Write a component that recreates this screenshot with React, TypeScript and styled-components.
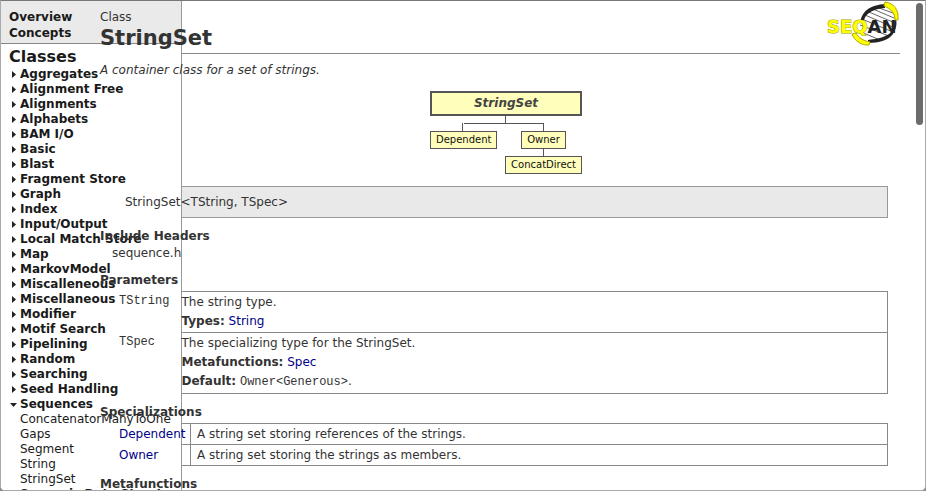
import React from "react";
import styled, { createGlobalStyle, css } from "styled-components";

const GlobalStyle = createGlobalStyle`
  *, *::before, *::after { box-sizing: border-box; }
  body {
    margin: 0;
    background: #8a8a8a;
    color: #333;
    font: 12px/16px "DejaVu Sans", Verdana, sans-serif;
  }
  a { color: inherit; text-decoration: none; }
`;

const Frame = styled.div`
  position: relative;
  display: grid;
  grid-template-columns: 181px minmax(0, 1fr);
  grid-template-rows: minmax(0, 1fr);
  height: 100vh;
  overflow: hidden;
  background: #fff;
  border: 1px solid #aaa;
  border-top-color: #777;
  border-radius: 0 0 5px 5px;
`;

const Sidebar = styled.aside`
  z-index: 1;
  grid-column: 1;
  grid-row: 1;
  display: flex;
  flex-direction: column;
  overflow: hidden;
  background: #fff;
  border-right: 1px solid #999;
  color: #1a1a1a;
`;

const TopLinks = styled.nav`
  display: flex;
  flex-direction: column;
  padding: 8px 8px 2px;
  background: #eaeaea;
  border-bottom: 1px solid #888;
  font-weight: bold;
`;

const SidebarTitle = styled.h2`
  margin: 0;
  padding: 2px 8px 0;
  font-size: 16px;
  line-height: 21px;
`;

const Tree = styled.ul`
  margin: 0;
  padding: 0 8px;
  list-style: none;
  line-height: 15px;
  white-space: nowrap;
`;

const Category = styled.button`
  display: flex;
  align-items: center;
  padding: 0;
  border: 0;
  background: none;
  color: inherit;
  font: inherit;
  font-weight: bold;
`;

const Arrow = styled.svg`
  width: 11px;
  height: 9px;
  flex: none;
`;

const Leaves = styled.ul`
  margin: 0;
  padding: 0 0 0 11px;
  list-style: none;
`;

const Main = styled.main`
  grid-column: 1 / -1;
  grid-row: 1;
  padding: 8px 25px 0 0;
  overflow: hidden;
`;

const above = css`
  position: relative;
  z-index: 2;
`;

const Header = styled.header`
  display: flex;
  justify-content: space-between;
  height: 45px;
  padding-left: 99px;
  border-bottom: 1px solid #888;
`;

const Kind = styled.div`
  ${above}
`;

const Title = styled.h1`
  ${above}
  margin: 0;
  font-size: 21px;
  line-height: 26px;
`;

const Logo = styled.svg`
  width: 76px;
  height: 50px;
  margin-top: -9px;
  flex: none;
`;

const Summary = styled.p`
  ${above}
  margin: 8px 0 13px 99px;
  font-style: italic;
`;

const HierarchyRow = styled.div`
  display: flex;
  justify-content: center;
  padding-left: 111px;
`;

const Hierarchy = styled.figure`
  display: flex;
  flex-direction: column;
  width: 152px;
  margin: 0 0 12px;
  font-size: 10px;
  line-height: 16px;
`;

const RootNode = styled.div`
  height: 25px;
  border: 2px solid #555;
  background: #ffffbb;
  color: #444;
  font: italic bold 12px/21px "DejaVu Sans", Verdana, sans-serif;
  text-align: center;
`;

const Connectors = styled.svg`
  display: block;
  width: 152px;
  height: 15px;
`;

const Branches = styled.div`
  display: flex;
  align-items: flex-start;
  justify-content: space-between;
`;

const Branch = styled.div`
  display: flex;
  flex-direction: column;
  align-items: center;
`;

const Node = styled.a`
  padding: 0 5px;
  border: 1px solid #555;
  background: #ffffbb;
  color: #111;
  white-space: nowrap;
`;

const Stem = styled.span`
  width: 1px;
  height: 7px;
  background: #555;
`;

const Signature = styled.div`
  margin: 0 12px 10px 111px;
  padding: 7px 12px;
  border: 1px solid #999;
  background: #e9e9e9;
`;

const Text = styled.span`
  ${above}
`;

const Heading = styled.h3`
  ${above}
  margin: 0 0 0 99px;
  font-size: 12px;
  line-height: 16px;
`;

const Include = styled.div`
  ${above}
  margin: 1px 0 11px 111px;
`;

const TableWrap = styled.div`
  display: grid;
  margin: 3px 12px 10px 111px;
`;

const Table = styled.table`
  border-collapse: collapse;
  border: 1px solid #888;
`;

const ParamName = styled.th`
  width: 69px;
  padding: 1px 0 0 6px;
  border-bottom: 1px solid #888;
  font: 12px/16px "Liberation Mono", monospace;
  text-align: left;
  vertical-align: top;
`;

const ParamInfo = styled.td<{ $last?: boolean }>`
  padding: 1px 0 ${(p) => (p.$last ? 2 : 1)}px;
  border-bottom: 1px solid #888;
  line-height: 19px;
`;

const SpecCell = styled.td<{ $name?: boolean }>`
  width: ${(p) => (p.$name ? "78px" : "auto")};
  padding: 2px ${(p) => (p.$name ? 4 : 6)}px 2px 6px;
  border: 1px solid #888;
`;

const Link = styled.a`
  && { color: #000088; }
`;

const Code = styled.code`
  font: 12px "Liberation Mono", monospace;
`;

const ScrollThumb = styled.div`
  position: absolute;
  top: 2px;
  right: 2px;
  width: 7px;
  height: 122px;
  border-radius: 4px;
  background: #6b6b6b;
`;

const leaves = ["ConcatenatorManyToOne", "Gaps", "Segment", "String", "StringSet"];

const categories: { name: string; items?: string[] }[] = [
  ...[
    "Aggregates", "Alignment Free", "Alignments", "Alphabets", "BAM I/O", "Basic",
    "Blast", "Fragment Store", "Graph", "Index", "Input/Output",
    "Local Match Store", "Map", "MarkovModel", "Miscalleneous", "Miscellaneous",
    "Modifier", "Motif Search", "Pipelining", "Random", "Searching", "Seed Handling",
  ].map((name) => ({ name })),
  { name: "Sequences", items: leaves },
  { name: "Synopsis Data Structures" },
];

function SeqanLogo() {
  return (
    <Logo viewBox="0 0 76 50" role="img" aria-label="SeqAn">
      <path d="M37 22C39 12 48 6 62 5L70 11C74 22 72 31 66 36C60 40 52 41 45 41L34 36Z" fill="#fff" />
      <path d="M55 8l14 5M49 9l21 9M45 12l26 11M41 15l30 13M38 19l31 13M36 25l29 11M35 31l21 9" stroke="#666" />
      <path d="M61 4C48 5 39 9 36 22L40 20C42 13 49 9 61 8Z" fill="#222" />
      <path d="M69 12C73 21 71 29 65 34C59 38 51 39 44 40L44 43C55 43 65 40 69 34C74 27 73 19 70 12Z" fill="#222" />
      <path d="M61 2C70 3 75 10 74 20L71 20C71 13 67 9 60 6Z" fill="#ff0" stroke="#b0a800" />
      <path d="M28 34C30 40 37 46 45 45L46 42C39 41 34 37 32 33Z" fill="#ff0" stroke="#b0a800" />
      <text x="3" y="33" fontFamily="DejaVu Sans" fontWeight="bold" fontSize="18" fill="#ff0" stroke="#999900" strokeWidth="1" paintOrder="stroke">
        SEQ<tspan fill="#222" stroke="none">AN</tspan>
      </text>
    </Logo>
  );
}

export default function App() {
  return (
    <>
      <GlobalStyle />
      <Frame>
        <Sidebar>
          <TopLinks>
            <a href="#overview">Overview</a>
            <a href="#concepts">Concepts</a>
          </TopLinks>
          <SidebarTitle>Classes</SidebarTitle>
          <Tree>
            {categories.map(({ name, items }) => (
              <li key={name}>
                <Category aria-expanded={Boolean(items)}>
                  <Arrow viewBox="0 0 11 9" aria-hidden="true">
                    <path d={items ? "M1 3h7L4.500 7z" : "M3 1v7l4-3.500z"} fill="#222" />
                  </Arrow>
                  {name}
                </Category>
                {items && (
                  <Leaves>
                    {items.map((leaf) => (
                      <li key={leaf}><a href={"#" + leaf}>{leaf}</a></li>
                    ))}
                  </Leaves>
                )}
              </li>
            ))}
          </Tree>
        </Sidebar>
        <Main>
          <Header>
            <div>
              <Kind>Class</Kind>
              <Title>StringSet</Title>
            </div>
            <SeqanLogo />
          </Header>
          <Summary>A container class for a set of strings.</Summary>
          <HierarchyRow>
            <Hierarchy>
              <RootNode>StringSet</RootNode>
              <Connectors viewBox="0 0 152 15" aria-hidden="true">
                <path d="M75.500 0v8M34 7.500h80M32.500 7v8M113.500 7v8" fill="none" stroke="#555" />
              </Connectors>
              <Branches>
                <Node href="#Dependent">Dependent</Node>
                <Branch>
                  <Node href="#Owner">Owner</Node>
                  <Stem />
                  <Node href="#ConcatDirect">ConcatDirect</Node>
                </Branch>
              </Branches>
            </Hierarchy>
          </HierarchyRow>
          <Signature><Text>StringSet&lt;TString, TSpec&gt;</Text></Signature>
          <Heading>Include Headers</Heading>
          <Include>sequence.h</Include>
          <Heading>Parameters</Heading>
          <TableWrap>
            <Table>
              <tbody>
                <tr>
                  <ParamName scope="row"><Text>TString</Text></ParamName>
                  <ParamInfo>
                    <Text>
                      The string type.<br />
                      <b>Types:</b> <Link href="#String">String</Link>
                    </Text>
                  </ParamInfo>
                </tr>
                <tr>
                  <ParamName scope="row"><Text>TSpec</Text></ParamName>
                  <ParamInfo $last>
                    <Text>
                      The specializing type for the StringSet.<br />
                      <b>Metafunctions:</b> <Link href="#Spec">Spec</Link><br />
                      <b>Default:</b> <Code>Owner&lt;Generous&gt;</Code>.
                    </Text>
                  </ParamInfo>
                </tr>
              </tbody>
            </Table>
          </TableWrap>
          <Heading>Specializations</Heading>
          <TableWrap>
            <Table>
              <tbody>
                <tr>
                  <SpecCell $name><Text><Link href="#Dependent">Dependent</Link></Text></SpecCell>
                  <SpecCell>A string set storing references of the strings.</SpecCell>
                </tr>
                <tr>
                  <SpecCell $name><Text><Link href="#Owner">Owner</Link></Text></SpecCell>
                  <SpecCell>A string set storing the strings as members.</SpecCell>
                </tr>
              </tbody>
            </Table>
          </TableWrap>
          <Heading>Metafunctions</Heading>
        </Main>
        <ScrollThumb />
      </Frame>
    </>
  );
}
